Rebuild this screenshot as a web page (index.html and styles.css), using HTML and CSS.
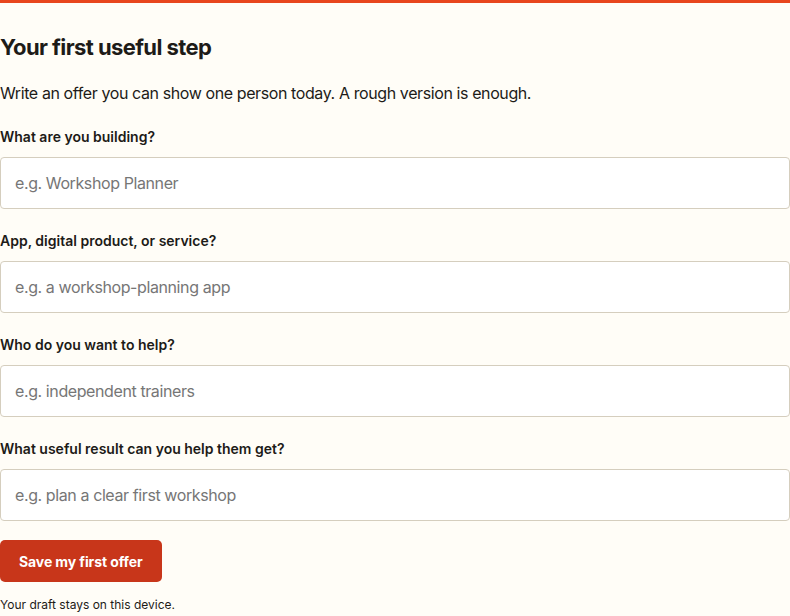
FILE: index.html
```html
<!DOCTYPE html>
<html lang="en">
<head>
  <meta charset="UTF-8" />
  <meta name="viewport" content="width=device-width, initial-scale=1.0"/>
  <title>Your first useful step</title>
  <link rel="stylesheet" href="styles.css">
</head>
<body>
  <main class="step">
    <h1>Your first useful step</h1>
    <p class="intro">Write an offer you can show one person today. A rough version is enough.</p>

    <form class="offer-form" id="offerForm">
      <label class="field">
        <span>What are you building?</span>
        <input type="text" name="name" placeholder="e.g. Workshop Planner">
      </label>

      <label class="field">
        <span>App, digital product, or service?</span>
        <input type="text" name="kind" placeholder="e.g. a workshop-planning app">
      </label>

      <label class="field">
        <span>Who do you want to help?</span>
        <input type="text" name="who" placeholder="e.g. independent trainers">
      </label>

      <label class="field">
        <span>What useful result can you help them get?</span>
        <input type="text" name="result" placeholder="e.g. plan a clear first workshop">
      </label>

      <button type="submit" class="save-btn">Save my first offer</button>
      <p class="note">Your draft stays on this device.</p>
    </form>
  </main>
</body>
</html>
```

FILE: styles.css
```css
body {
  margin: 0;
  background-color: #fffdf7;
  border-top: 3px solid #e8461e;
  font-family: Inter, "Noto Sans", sans-serif;
  color: #1d1b18;
}

.step {
  padding: 0;
}

h1 {
  font-size: 22px;
  font-weight: 700;
  letter-spacing: -0.6px;
  margin: 30px 0 0;
  line-height: 28px;
}

.intro {
  font-size: 16px;
  letter-spacing: -0.4px;
  margin: 20px 0 0;
  line-height: 24px;
}

.offer-form {
  display: flex;
  flex-direction: column;
  margin-top: 22px;
}

.field {
  display: flex;
  flex-direction: column;
  gap: 10px;
  margin-bottom: 22px;
}

.field:last-of-type {
  margin-bottom: 19px;
}

.field span {
  font-size: 14px;
  font-weight: 600;
  line-height: 20px;
}

.field input {
  height: 52px;
  box-sizing: border-box;
  border: 1px solid #d5cebe;
  border-radius: 4px;
  background: #fff;
  padding: 0 14px;
  font-family: inherit;
  font-size: 16px;
  letter-spacing: -0.4px;
  color: #1d1b18;
}

.field input::placeholder {
  color: #767676;
}

.save-btn {
  align-self: flex-start;
  height: 42px;
  padding: 0 19px;
  background-color: #c8361a;
  color: #fff;
  border: none;
  border-radius: 5px;
  font-family: inherit;
  font-size: 14px;
  font-weight: 700;
  letter-spacing: -0.1px;
  cursor: pointer;
}

.note {
  font-size: 12px;
  margin: 14px 0 0;
  line-height: 18px;
}
```
